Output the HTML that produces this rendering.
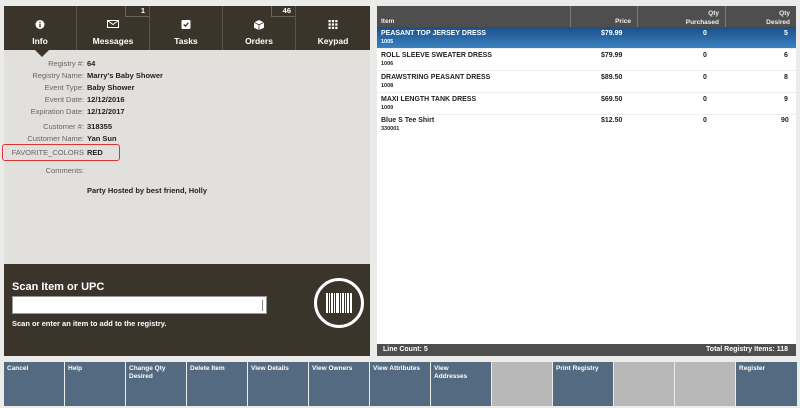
<!DOCTYPE html>
<html><head><style>
*{margin:0;padding:0;box-sizing:border-box}
body{width:800px;height:408px;background:#ebebea;font-family:"Liberation Sans",Arial,sans-serif;position:relative;overflow:hidden;font-weight:bold}
.abs{position:absolute}
#left{left:4px;top:6px;width:366px;height:258px;background:#e2e0dc}
#tabs{left:4px;top:6px;width:366px;height:44px;background:#3a342b}
.tab{position:absolute;top:0;height:44px;width:73px;color:#fff;font-size:8.5px;text-align:center;border-right:1px solid #5a544b}
.tab .lbl{position:absolute;top:30px;width:100%}
.tab .ic{position:absolute;top:14px;left:50%;transform:translateX(-50%)}
.badge{position:absolute;top:0;right:0;width:24px;height:11px;border-left:1px solid #6a645b;border-bottom:1px solid #6a645b;color:#fff;font-size:7.5px;text-align:right;padding-right:4px;line-height:10px}
.row{position:absolute;font-size:7.5px;color:#222;white-space:nowrap}
.row .k{position:absolute;right:0;color:#666;font-weight:normal;text-align:right}
.k{color:#666}
#scan{left:4px;top:264px;width:366px;height:92px;background:#3a342b}
#right{left:377px;top:6px;width:419px;height:338px;background:#fff}
#hdr{left:377px;top:6px;width:419px;height:21px;background:#4e4e4e}
.hc{position:absolute;top:0;height:21px;color:#eee;font-size:6.5px;border-right:1px solid #777;text-align:right;padding-right:6px}
.tr{position:absolute;left:377px;width:419px;height:22px;border-bottom:1px solid #eee;font-size:7px;color:#222}
.tr span{position:absolute}
.sel{background:linear-gradient(#1b4f88,#3a82c0);color:#fff}
#foot{left:377px;top:344px;width:419px;height:12px;background:#4e4e4e;color:#fff;font-size:7px;line-height:12px}
.btn{position:absolute;top:362px;height:44px;width:60px;background:#546a80;color:#fff;font-size:6.5px;padding:3px 3px;line-height:8px}
.btn.e{background:#b8b8b8}
</style></head><body>
<div id="left" class="abs"></div>
<div id="tabs" class="abs">
 <div class="tab" style="left:0"><svg class="ic" width="9" height="9" viewBox="0 0 8 8"><circle cx="4" cy="4" r="4" fill="#fff"/><rect x="3.4" y="1.5" width="1.2" height="1" fill="#3a342b"/><rect x="3.4" y="3.2" width="1.2" height="3.3" fill="#3a342b"/></svg><div class="lbl">Info</div></div>
 <div class="tab" style="left:73px"><svg class="ic" width="13" height="8" viewBox="0 0 12 8" style="top:14px"><rect x="0.5" y="0.5" width="11" height="7" fill="none" stroke="#fff"/><path d="M0.5 0.5L6 4.5L11.5 0.5" fill="none" stroke="#fff"/></svg><div class="lbl">Messages</div><div class="badge">1</div></div>
 <div class="tab" style="left:146px"><svg class="ic" width="9" height="9" viewBox="0 0 8 8"><rect width="8" height="8" rx="1" fill="#fff"/><path d="M2 4L3.5 5.5L6 2.5" stroke="#3a342b" fill="none" stroke-width="1.2"/></svg><div class="lbl">Tasks</div></div>
 <div class="tab" style="left:219px"><svg class="ic" width="10" height="10" viewBox="0 0 9 9"><path d="M4.5 0L9 2.2V7L4.5 9L0 7V2.2Z" fill="#fff"/><path d="M0 2.2L4.5 4.3L9 2.2M4.5 4.3V9" stroke="#3a342b" fill="none" stroke-width=".7"/></svg><div class="lbl">Orders</div><div class="badge">46</div></div>
 <div class="tab" style="left:292px;border:none;width:74px"><svg class="ic" width="9" height="9" viewBox="0 0 8 8" fill="#fff"><rect x="0" y="0" width="2" height="2"/><rect x="3" y="0" width="2" height="2"/><rect x="6" y="0" width="2" height="2"/><rect x="0" y="3" width="2" height="2"/><rect x="3" y="3" width="2" height="2"/><rect x="6" y="3" width="2" height="2"/><rect x="0" y="6" width="2" height="2"/><rect x="3" y="6" width="2" height="2"/><rect x="6" y="6" width="2" height="2"/></svg><div class="lbl">Keypad</div></div>
</div>
<div class="abs" style="left:35px;top:50px;width:0;height:0;border-left:7px solid transparent;border-right:7px solid transparent;border-top:7px solid #3a342b"></div>

<div class="row" style="left:0;top:59px;width:84px"><span class="k">Registry #:</span></div><div class="row" style="left:87px;top:59px">64</div>
<div class="row" style="left:0;top:71px;width:84px"><span class="k">Registry Name:</span></div><div class="row" style="left:87px;top:71px">Marry's Baby Shower</div>
<div class="row" style="left:0;top:83px;width:84px"><span class="k">Event Type:</span></div><div class="row" style="left:87px;top:83px">Baby Shower</div>
<div class="row" style="left:0;top:95px;width:84px"><span class="k">Event Date:</span></div><div class="row" style="left:87px;top:95px">12/12/2016</div>
<div class="row" style="left:0;top:107px;width:84px"><span class="k">Expiration Date:</span></div><div class="row" style="left:87px;top:107px">12/12/2017</div>
<div class="row" style="left:0;top:122px;width:84px"><span class="k">Customer #:</span></div><div class="row" style="left:87px;top:122px">318355</div>
<div class="row" style="left:0;top:134px;width:84px"><span class="k">Customer Name:</span></div><div class="row" style="left:87px;top:134px">Yan Sun</div>
<div class="row" style="left:0;top:148px;width:84px"><span class="k">FAVORITE_COLORS</span></div><div class="row" style="left:87px;top:148px">RED</div>
<div class="abs" style="left:2px;top:144px;width:118px;height:17px;border:1.5px solid #d33;border-radius:3px"></div>
<div class="row" style="left:0;top:166px;width:84px"><span class="k">Comments:</span></div>
<div class="row" style="left:87px;top:186px">Party Hosted by best friend, Holly</div>

<div id="scan" class="abs">
 <div class="abs" style="left:8px;top:17px;color:#fff;font-size:11px">Scan Item or UPC</div>
 <div class="abs" style="left:8px;top:32px;width:255px;height:18px;background:#fff;border:1px solid #999"><div class="abs" style="right:3px;top:3px;width:1px;height:11px;background:#888"></div></div>
 <div class="abs" style="left:8px;top:55px;color:#fff;font-size:7.5px">Scan or enter an item to add to the registry.</div>
 <div class="abs" style="left:310px;top:14px;width:50px;height:50px;border:3px solid #fff;border-radius:50%"></div>
 <svg class="abs" style="left:322px;top:29px" width="26" height="20" viewBox="0 0 26 20" fill="#fff"><rect x="0" width="2" height="20"/><rect x="3" width="1" height="20"/><rect x="5" width="2" height="20"/><rect x="8" width="1" height="20"/><rect x="10" width="3" height="20"/><rect x="14" width="1" height="20"/><rect x="16" width="2" height="20"/><rect x="19" width="1" height="20"/><rect x="21" width="2" height="20"/><rect x="24" width="2" height="20"/></svg>
</div>

<div id="right" class="abs"></div>
<div id="hdr" class="abs">
 <div class="hc" style="left:0;width:194px;text-align:left;padding:12px 0 0 4px">Item</div>
 <div class="hc" style="left:194px;width:67px;padding-top:12px">Price</div>
 <div class="hc" style="left:261px;width:88px;padding-top:3px;line-height:9px">Qty<br>Purchased</div>
 <div class="hc" style="left:349px;width:70px;padding-top:3px;line-height:9px;border:none">Qty<br>Desired</div>
</div>
<div class="tr sel" style="top:27px;height:22px"><span style="left:4px;top:3px">PEASANT TOP JERSEY DRESS</span><span style="left:4px;top:12px;font-size:5.5px">1005</span><span style="left:224px;top:3px">$79.99</span><span style="left:326px;top:3px">0</span><span style="left:407px;top:3px">5</span></div>
<div class="tr" style="top:49px"><span style="left:4px;top:3px">ROLL SLEEVE SWEATER DRESS</span><span style="left:4px;top:12px;font-size:5.5px">1006</span><span style="left:224px;top:3px">$79.99</span><span style="left:326px;top:3px">0</span><span style="left:407px;top:3px">6</span></div>
<div class="tr" style="top:71px"><span style="left:4px;top:3px">DRAWSTRING PEASANT DRESS</span><span style="left:4px;top:12px;font-size:5.5px">1008</span><span style="left:224px;top:3px">$89.50</span><span style="left:326px;top:3px">0</span><span style="left:407px;top:3px">8</span></div>
<div class="tr" style="top:93px"><span style="left:4px;top:3px">MAXI LENGTH TANK DRESS</span><span style="left:4px;top:12px;font-size:5.5px">1009</span><span style="left:224px;top:3px">$69.50</span><span style="left:326px;top:3px">0</span><span style="left:407px;top:3px">9</span></div>
<div class="tr" style="top:115px;border:none"><span style="left:4px;top:2px">Blue S Tee Shirt</span><span style="left:4px;top:11px;font-size:5.5px">330001</span><span style="left:224px;top:2px">$12.50</span><span style="left:326px;top:2px">0</span><span style="left:404px;top:2px">90</span></div>

<div id="foot" class="abs"><span style="position:absolute;left:6px">Line Count: 5</span><span style="position:absolute;right:8px">Total Registry Items: 118</span></div>

<div class="btn" style="left:4px">Cancel</div>
<div class="btn" style="left:65px">Help</div>
<div class="btn" style="left:126px">Change Qty<br>Desired</div>
<div class="btn" style="left:187px">Delete Item</div>
<div class="btn" style="left:248px">View Details</div>
<div class="btn" style="left:309px">View Owners</div>
<div class="btn" style="left:370px">View Attributes</div>
<div class="btn" style="left:431px">View<br>Addresses</div>
<div class="btn e" style="left:492px"></div>
<div class="btn" style="left:553px">Print Registry</div>
<div class="btn e" style="left:614px"></div>
<div class="btn e" style="left:675px"></div>
<div class="btn" style="left:736px;width:61px">Register</div>
</body></html>
